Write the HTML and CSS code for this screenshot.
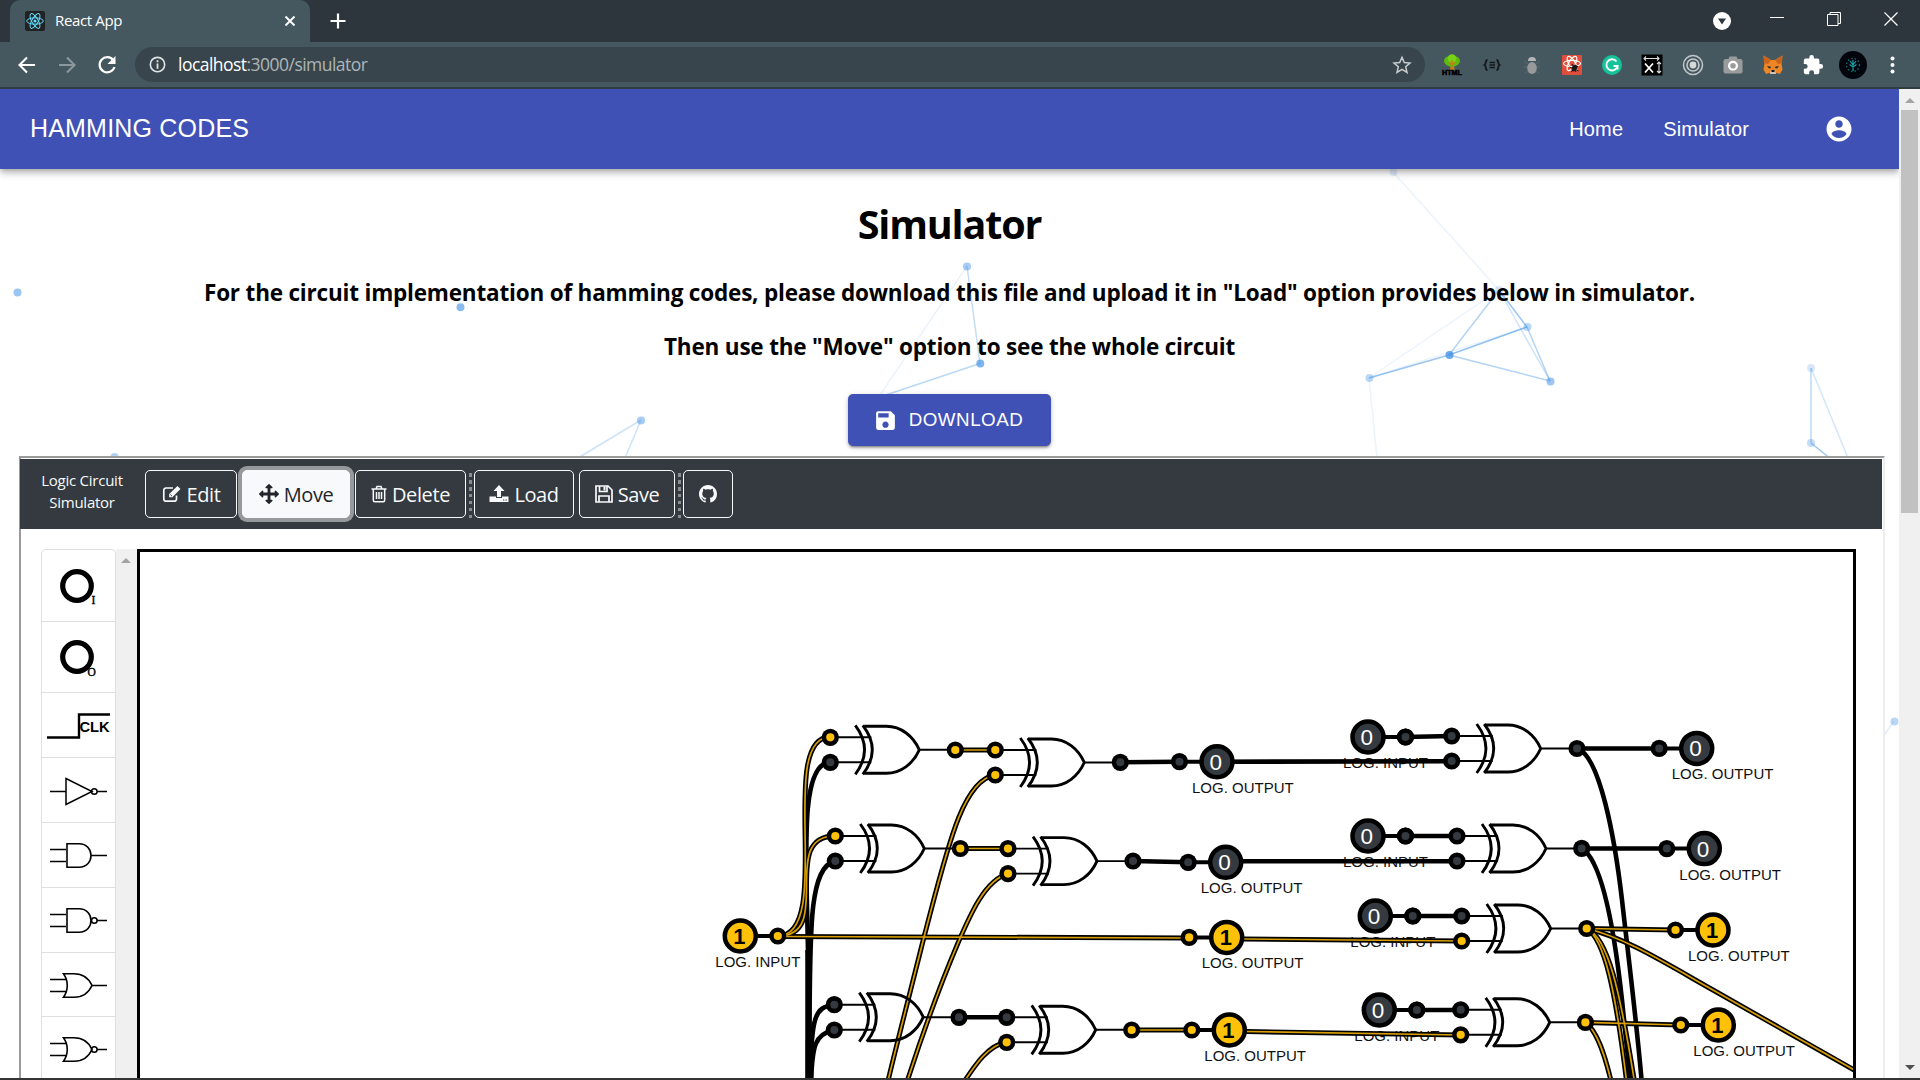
FILE: index.html
```html
<!DOCTYPE html>
<html lang="en">
<head>
<meta charset="utf-8">
<title>React App</title>
<link rel="stylesheet" href="styles.css">
</head>
<body>
<div class="window">
  <div class="tabstrip">
    <div class="tab">
      <svg class="favicon" viewBox="0 0 20 20"><rect width="20" height="20" rx="2" fill="#222"/><g fill="none" stroke="#61dafb" stroke-width="1"><ellipse cx="10" cy="10" rx="8.3" ry="3.2"/><ellipse cx="10" cy="10" rx="8.3" ry="3.2" transform="rotate(60 10 10)"/><ellipse cx="10" cy="10" rx="8.3" ry="3.2" transform="rotate(120 10 10)"/></g><circle cx="10" cy="10" r="1.6" fill="#61dafb"/></svg>
      <span class="tab-title">React App</span>
      <svg class="tab-close" viewBox="0 0 12 12"><path d="M1.5 1.5l9 9M10.500 1.500l-9 9" stroke="#fff" stroke-width="1.9"/></svg>
    </div>
    <svg class="newtab" viewBox="0 0 16 16"><path d="M8 .5v15M.5 8h15" stroke="#fff" stroke-width="2.2"/></svg>
    <div class="win-buttons">
      <svg viewBox="0 0 18 18" class="wb-media"><circle cx="9" cy="9" r="9" fill="#fff"/><path d="M5 6.500h8l-4 6z" fill="#2c363c"/></svg>
      <svg viewBox="0 0 14 14" class="wb"><path d="M0 5.500h14" stroke="#fff"/></svg>
      <svg viewBox="0 0 14 14" class="wb"><path d="M.5 2.500h10.500v11H.5zM3 2.500v-2h10.500v11H11" fill="none" stroke="#fff"/></svg>
      <svg viewBox="0 0 14 14" class="wb"><path d="M.5 .5l13 13M13.500 .5l-13 13" stroke="#fff" stroke-width="1.200"/></svg>
    </div>
  </div>
  <div class="toolbar">
    <svg class="nav" viewBox="0 0 20 20"><path d="M18 10H3M10 2.500L2.500 10l7.500 7.500" fill="none" stroke="#fff" stroke-width="2.100"/></svg>
    <svg class="nav" viewBox="0 0 20 20"><path d="M2 10h15M10 2.500l7.500 7.500-7.500 7.500" fill="none" stroke="#8d989d" stroke-width="2.100"/></svg>
    <svg class="nav" viewBox="0 0 20 20"><path d="M16.400 5.300A7.600 7.600 0 1 0 17.500 12" fill="none" stroke="#fff" stroke-width="2.200"/><path d="M18.500 1v8h-8z" fill="#fff"/></svg>
    <div class="omnibox">
      <svg class="info" viewBox="0 0 18 18"><circle cx="9" cy="9" r="7.600" fill="none" stroke="#dfe3e5" stroke-width="1.700"/><path d="M9 4.500v2M9 8v5.500" stroke="#dfe3e5" stroke-width="1.900"/></svg>
      <span class="url"><b>localhost</b>:3000/simulator</span>
      <svg class="star" viewBox="0 0 20 20"><path d="M10 2.300l2.300 5.200 5.700.5-4.300 3.800 1.300 5.600-5-3-5 3 1.300-5.600L2 8l5.700-.5z" fill="none" stroke="#c9cdcf" stroke-width="1.500"/></svg>
    </div>
    <div class="extensions">
      <svg viewBox="0 0 22 22"><path d="M9.500 11L9 16h4.500L13 11z" fill="#c8791c"/><ellipse cx="11" cy="7" rx="8" ry="5.500" fill="#5dbb10"/><circle cx="11" cy="4.500" r="4.300" fill="#76d214"/><path d="M11 6v5l3-3M11 11L8 8" fill="none" stroke="#c8791c" stroke-width="1.300"/><text x="11" y="21" text-anchor="middle" font-size="6.500" font-weight="700" stroke="#000" stroke-width=".5" textLength="20" lengthAdjust="spacingAndGlyphs">HTML</text></svg>
      <svg viewBox="0 0 22 22"><path d="M6.500 6C4 6 5.500 10 3.500 11c2 1 .5 5 3 5M15.500 6c2.500 0 1 4 3 5-2 1-.5 5-3 5" fill="none" stroke="#14191c" stroke-width="1.900"/><path d="M8.500 8.500h5.500M8.500 11h5.500M8.500 13.500h5.500" stroke="#14191c" stroke-width="1.300"/></svg>
      <svg viewBox="0 0 22 22"><path d="M3 7l4 3M19 7l-4 3M2.500 13H19M4 19l4-3M18 19l-4-3" stroke="#5d696e" stroke-width="1"/><ellipse cx="11" cy="14" rx="4.800" ry="6" fill="#98999b"/><path d="M7 7a4 4 0 0 1 8 0z" fill="#b5b5b5"/></svg>
      <svg viewBox="0 0 22 22"><rect x="1" y="1" width="20" height="20" rx="1" fill="#df4d3b"/><g fill="none" stroke="#fff" stroke-width="1.200"><ellipse cx="11" cy="9.500" rx="8.500" ry="3.200"/><ellipse cx="11" cy="9.500" rx="8" ry="3.200" transform="rotate(60 11 9.500)"/><ellipse cx="11" cy="9.500" rx="8" ry="3.200" transform="rotate(120 11 9.500)"/></g><ellipse cx="13.500" cy="14" rx="2.600" ry="3.500" transform="rotate(35 13.500 14)" fill="#1b1212"/><path d="M8.500 13l9 4M10 18l7-6M11 10l4 8" stroke="#1b1212"/></svg>
      <svg viewBox="0 0 22 22"><circle cx="11" cy="11" r="10" fill="#15c39a"/><path d="M15.500 7.500a5.600 5.600 0 1 0 1 4.500h-4M16.500 11.500v4" fill="none" stroke="#fff" stroke-width="1.900"/></svg>
      <svg viewBox="0 0 22 22"><rect x=".5" y=".5" width="21" height="21" fill="#000"/><path d="M4 9.500l8 9M12 9.500l-8 9" stroke="#fff" stroke-width="1.800"/><path d="M3 4.500h15M5 2.500l-2 2 2 2M16 2.500l2 2-2 2M18 8v11M16 10l2-2 2 2M16 17l2 2 2-2" fill="none" stroke="#ddd" stroke-width="1.100"/></svg>
      <svg viewBox="0 0 22 22"><g fill="none" stroke="#c4c8ca"><circle cx="11" cy="11" r="9.500" stroke-width="1.500"/><circle cx="11" cy="11" r="6" stroke-width="1.600"/></g><circle cx="11" cy="11" r="3.400" fill="#d5d8d9"/></svg>
      <svg viewBox="0 0 22 22"><rect x="1.500" y="5" width="19" height="14.500" rx="2.200" fill="#999b9c"/><path d="M6 6l1.500-3.500h7L16 6z" fill="#999b9c"/><circle cx="11" cy="11.700" r="3.900" fill="#999b9c" stroke="#fff" stroke-width="2.200"/></svg>
      <svg viewBox="0 0 22 22"><path d="M1.500 1.500L9 6h4l7.500-4.500-1 8 1 6-2.500 4.500-5-1.500h-4L4 20l-2.500-4.500 1-6z" fill="#ef8524"/><path d="M1.500 1.500L9 6l-3 4-4-1zM20.500 1.500L13 6l3 4 4-1z" fill="#c9651b"/><path d="M5 12l3.500.5.5 1.500-2 .5zM17 12l-3.500.5-.5 1.500 2 .5z" fill="#2b3237"/><path d="M8.500 16.500h5l.5 3.500H8z" fill="#d7c1b3"/><path d="M9.500 16h3v2h-3z" fill="#161616"/></svg>
      <svg viewBox="0 0 24 24"><path d="M20.500 11H19V7a2 2 0 0 0-2-2h-4V3.500a2.500 2.500 0 0 0-5 0V5H4a2 2 0 0 0-2 2v3.800h1.500a2.700 2.700 0 0 1 0 5.400H2V20c0 1.100.9 2 2 2h3.800v-1.500a2.700 2.700 0 0 1 5.400 0V22H17a2 2 0 0 0 2-2v-4h1.500a2.500 2.500 0 0 0 0-5z" fill="#fff"/></svg>
      <svg class="avatar" viewBox="0 0 28 28"><circle cx="14" cy="14" r="14" fill="#02050c"/><circle cx="14" cy="14" r="6.500" fill="none" stroke="#106a70" stroke-width="1.300" stroke-dasharray="1.500 2"/><path d="M14 9v11M11 10l3 4 3-4M10.500 13.500L14 16l3.500-2.500" fill="none" stroke="#159da3" stroke-width="1.200"/></svg>
      <svg viewBox="0 0 22 22"><g fill="#fff"><circle cx="10.500" cy="4.500" r="2"/><circle cx="10.500" cy="11" r="2"/><circle cx="10.500" cy="17.500" r="2"/></g></svg>
    </div>
  </div>

  <div class="viewport">
    <div class="page">
      <svg class="particles" viewBox="0 89 1899 989">
        <g stroke="#3a8ee6" fill="none" stroke-width="1.500">
          <path d="M967 266l13 97.500" opacity=".3"/><path d="M980 363.500L850 407" opacity=".35"/><path d="M967 266L880 395" opacity=".1"/>
          <path d="M641 420l-63 38M641 420l-16 38" opacity=".25"/>
          <path d="M1393 172l106 118M1369 378l130-88M1369 378l8 80M1369 378l158-51" opacity=".1"/>
          <path d="M1499 290l28 37M1369 378l80-23" opacity=".5"/><path d="M1449 355l78-28" opacity=".55"/>
          <path d="M1499 290l-50 65M1449 355l101 26M1527 327l23 54" opacity=".38"/><path d="M1499 290l51 91" opacity=".25"/>
          <path d="M1811 368v75" opacity=".35"/><path d="M1811 368l37 90" opacity=".22"/><path d="M1811 443l20 16" opacity=".5"/>
          <path d="M1894 721l-11 16" opacity=".15"/>
        </g>
        <g fill="#3a8ee6"><circle cx="17.500" cy="292.500" r="4" opacity=".5"/><circle cx="460.500" cy="307.300" r="4" opacity=".6"/><circle cx="641" cy="420.500" r="4" opacity=".45"/><circle cx="114.500" cy="457" r="4" opacity=".4"/><circle cx="967" cy="266.500" r="4" opacity=".45"/><circle cx="980.300" cy="363.500" r="4" opacity=".65"/><circle cx="1393.500" cy="172" r="4" opacity=".15"/><circle cx="1499" cy="290" r="4" opacity=".2"/><circle cx="1527.500" cy="327" r="4" opacity=".35"/><circle cx="1449.500" cy="355" r="4" opacity=".75"/><circle cx="1369.500" cy="378" r="4" opacity=".35"/><circle cx="1550.500" cy="381.500" r="4" opacity=".5"/><circle cx="1811" cy="368" r="4" opacity=".2"/><circle cx="1811" cy="443" r="4" opacity=".3"/><circle cx="1894.500" cy="721.500" r="4" opacity=".35"/></g>
      </svg>

      <header class="appbar">
        <span class="brand">HAMMING CODES</span>
        <nav class="links"><a>Home</a><a>Simulator</a></nav>
        <svg class="account" viewBox="0 0 24 24"><path fill="#fff" d="M12 2C6.480 2 2 6.480 2 12s4.480 10 10 10 10-4.480 10-10S17.520 2 12 2zm0 3c1.660 0 3 1.340 3 3s-1.340 3-3 3-3-1.340-3-3 1.340-3 3-3zm0 14.200c-2.500 0-4.710-1.280-6-3.220.03-1.990 4-3.080 6-3.080 1.990 0 5.970 1.090 6 3.080-1.290 1.940-3.500 3.220-6 3.220z"/></svg>
      </header>

      <section class="intro">
        <h1>Simulator</h1>
        <h3 class="line-one">For the circuit implementation of hamming codes, please download this file and upload it in "Load" option provides below in simulator.</h3>
        <h3 class="line-two">Then use the "Move" option to see the whole circuit</h3>
        <button class="download"><svg viewBox="0 0 24 24"><path fill="#fff" d="M17 3H5c-1.110 0-2 .9-2 2v14c0 1.100.89 2 2 2h14c1.100 0 2-.9 2-2V7l-4-4zm-5 16c-1.660 0-3-1.340-3-3s1.340-3 3-3 3 1.340 3 3-1.340 3-3 3zm3-10H5V5h10v4z"/></svg>DOWNLOAD</button>
      </section>

      <section class="frame">
        <div class="sim-bar">
          <div class="sim-name">Logic Circuit<br>Simulator</div>
          <div class="sim-buttons">
            <button class="btn b-edit"><svg viewBox="0 0 20 20"><path d="M14.500 11.500V15a2.200 2.200 0 0 1-2.200 2.200H4A2.200 2.200 0 0 1 1.800 15V6.200A2.200 2.200 0 0 1 4 4h7" fill="none" stroke="#f8f9fa" stroke-width="1.700"/><path d="M15.500 2l3 3-8.200 8.200H7.200v-3.100z" fill="#f8f9fa"/><path d="M8.300 10.500l1.700 1.700" stroke="#343a40"/></svg>Edit</button>
            <button class="btn b-move"><svg viewBox="0 0 1792 1792"><path fill="#212529" d="M1792 896q0 26-19 45l-256 256q-19 19-45 19t-45-19-19-45v-128h-384v384h128q26 0 45 19t19 45-19 45l-256 256q-19 19-45 19t-45-19l-256-256q-19-19-19-45t19-45 45-19h128v-384h-384v128q0 26-19 45t-45 19-45-19l-256-256q-19-19-19-45t19-45l256-256q19-19 45-19t45 19 19 45v128h384v-384h-128q-26 0-45-19t-19-45 19-45l256-256q19-19 45-19t45 19l256 256q19 19 19 45t-19 45-45 19h-128v384h384v-128q0-26 19-45t45-19 45 19l256 256q19 19 19 45z"/></svg>Move</button>
            <button class="btn b-delete"><svg viewBox="0 0 16 20"><path d="M.5 5h15M5 5l1-2.500h4L11 5M2.300 5v11q0 1.800 1.500 1.800h8.400q1.500 0 1.500-1.800V5M5.500 8v7M8 8v7M10.500 8v7" fill="none" stroke="#f8f9fa" stroke-width="1.500"/></svg>Delete</button>
            <i class="dots"></i>
            <button class="btn b-load"><svg viewBox="0 0 20 20"><path d="M10 1l5.500 6H12v6H8V7H4.500z" fill="#f8f9fa"/><path d="M.5 12.500H7V14h6v-1.500h6.500v5.500H.5z" fill="#f8f9fa"/><path d="M14 16h1.300M16.500 16h1.300" stroke="#343a40"/></svg>Load</button>
            <button class="btn b-save"><svg viewBox="0 0 18 20"><path d="M1 2h12l4 4v12H1zM4.500 2v5.500h7.500V2M4 18v-6h10v6" fill="none" stroke="#f8f9fa" stroke-width="1.700"/><path d="M8.500 2.500h2v4h-2z" fill="#f8f9fa"/></svg>Save</button>
            <i class="dots"></i>
            <button class="btn b-git"><svg viewBox="0 0 16 16"><path fill="#f8f9fa" d="M8 0C3.580 0 0 3.580 0 8c0 3.540 2.290 6.530 5.470 7.590.4.070.55-.17.55-.38 0-.19-.01-.82-.01-1.490-2.010.37-2.530-.49-2.690-.94-.09-.23-.48-.94-.82-1.130-.28-.15-.68-.52-.01-.53.63-.01 1.080.58 1.230.82.72 1.210 1.870.87 2.330.66.07-.52.28-.87.51-1.070-1.780-.2-3.640-.89-3.640-3.950 0-.87.31-1.590.82-2.150-.08-.2-.36-1.020.08-2.120 0 0 .67-.21 2.200.82.64-.18 1.320-.27 2-.27.68 0 1.360.09 2 .27 1.530-1.040 2.200-.82 2.200-.82.44 1.100.16 1.920.08 2.120.51.56.82 1.270.82 2.150 0 3.070-1.870 3.750-3.650 3.950.29.25.54.73.54 1.480 0 1.070-.01 1.930-.01 2.200 0 .21.15.46.55.38A8.013 8.013 0 0 0 16 8c0-4.420-3.580-8-8-8z"/></svg></button>
          </div>
        </div>
        <div class="workspace">
          <div class="palette">
            <div class="item r-io"><svg viewBox="0 0 75 72"><circle cx="36" cy="36" r="14.300" fill="none" stroke="#000" stroke-width="5.200"/><text x="50.500" y="54" class="io-letter">I</text></svg></div>
            <div class="item r-io2"><svg viewBox="0 0 75 71"><circle cx="36" cy="35" r="14.300" fill="none" stroke="#000" stroke-width="5.200"/><text x="46.500" y="54" class="io-letter">O</text></svg></div>
            <div class="item"><svg viewBox="0 0 75 64"><path d="M6 44.500h32V21.500h31" fill="none" stroke="#000" stroke-width="2.400"/><text x="38.500" y="38.500" class="clk">CLK</text></svg></div>
            <div class="item"><svg viewBox="0 0 75 64"><g fill="none" stroke="#000" stroke-width="1.500"><path d="M9 33.500h16M25 20.500v26l26-13zM56 33.500h10"/><circle cx="53.300" cy="33.500" r="2.800"/></g></svg></div>
            <div class="item"><svg viewBox="0 0 75 64"><g fill="none" stroke="#000" stroke-width="1.300"><path d="M9 26.500h16M9 38.500h16M50 32.500h16"/><path d="M26 20.800h12c16 0 16 23.400 0 23.400H26z" stroke-width="1.600"/></g></svg></div>
            <div class="item"><svg viewBox="0 0 75 64"><g fill="none" stroke="#000" stroke-width="1.300"><path d="M9 26.500h16M9 38.500h16M56 32.500h10"/><path d="M26 20.800h12c16 0 16 23.400 0 23.400H26z" stroke-width="1.600"/><circle cx="53.300" cy="32.500" r="2.800" stroke-width="1.600"/></g></svg></div>
            <div class="item"><svg viewBox="0 0 75 64"><g fill="none" stroke="#000" stroke-width="1.300"><path d="M9 26.500h17M9 38.500h17M51 32.500h15"/><path d="M22.500 20.800H33c9 0 15 5.200 18 11.700C48 39 42 44.200 33 44.200H22.500c5-7 5-16.400 0-23.400z" stroke-width="1.600"/></g></svg></div>
            <div class="item"><svg viewBox="0 0 75 64"><g fill="none" stroke="#000" stroke-width="1.300"><path d="M9 26.500h17M9 38.500h17M56 32.500h10"/><path d="M22.500 20.800H33c9 0 15 5.200 18 11.700C48 39 42 44.200 33 44.200H22.500c5-7 5-16.400 0-23.400z" stroke-width="1.600"/><circle cx="53.300" cy="32.500" r="2.800" stroke-width="1.600"/></g></svg></div>
          </div>
          <div class="palette-scroll"><i class="arrow-up"></i></div>
          <div class="canvas">
            <svg viewBox="140 552 1713 526" preserveAspectRatio="xMinYMin slice">
              <defs>
                <g id="off"><circle r="8.600"/><circle r="4" fill="#343a40"/></g>
                <g id="on"><circle r="8.600"/><circle r="4.100" fill="#ffc107"/></g>
                <g id="xor" fill="none" stroke="#000">
                  <path d="M0 0H41M0 25H41M89 12.500H125" stroke-width="1.900"/>
                  <path d="M25 -12Q43.500 12.500 25 37" stroke-width="2.900"/>
                  <path d="M32.500 -12Q51.500 12.500 32.500 37" stroke-width="2.900"/>
                  <path d="M34 -11H56C71 -11 83 -1 89 12.500C83 26 71 36 56 36H34" stroke-width="2.900"/>
                </g>
                <g id="in0"><path d="M0 0H37.500" stroke="#000" stroke-width="4"/><circle r="15.500" fill="#343a40" stroke="#000" stroke-width="4.500"/><text x="-7.500" y="8" class="zero">0</text><text x="-25" y="31" class="tag">LOG. INPUT</text><use href="#off" x="37.500"/></g>
                <g id="in1"><path d="M0 0H37.500" stroke="#000" stroke-width="4"/><circle r="15.500" fill="#ffc107" stroke="#000" stroke-width="4.500"/><text x="-7" y="8" class="one">1</text><text x="-25" y="31" class="tag">LOG. INPUT</text><use href="#on" x="37.500"/></g>
                <g id="out0"><path d="M0 0H-37.500" stroke="#000" stroke-width="4"/><circle r="15.500" fill="#343a40" stroke="#000" stroke-width="4.500"/><text x="-7.500" y="8" class="zero">0</text><text x="-25" y="31" class="tag">LOG. OUTPUT</text><use href="#off" x="-37.500"/></g>
                <g id="out1"><path d="M0 0H-37.500" stroke="#000" stroke-width="4"/><circle r="15.500" fill="#ffc107" stroke="#000" stroke-width="4.500"/><text x="-7" y="8" class="one">1</text><text x="-25" y="31" class="tag">LOG. OUTPUT</text><use href="#on" x="-37.500"/></g>
                <g id="live">
                  <path d="M778 936C835 936 776 737 830 737"/><path d="M778 936C835 936 778 836 835 836"/>
                  <path d="M778 936.500L1189 938"/><path d="M955 750H995M960 848.500H1008"/>
                  <path d="M995 775C962 780 947 850 924 937C912 985 899 1035 887 1085"/>
                  <path d="M1008 873.600C985 880 970 915 958 943C938 990 922 1035 906 1085"/>
                  <path d="M1007 1042C988 1045 975 1065 962 1085"/>
                  <path d="M1132 1030H1192M1244 939L1462 941M1246 1031.500L1461 1035"/>
                  <path d="M1587 928.500L1676 930M1585 1022.400L1681 1025"/>
                  <path d="M1587 928.500C1625 938 1660 960 1713 990L1856 1071"/>
                  <path d="M1587 928.500C1604 940 1615 985 1627 1085"/><path d="M1587 928.500C1608 938 1620 990 1635 1085"/>
                  <path d="M1585 1022.400C1597 1030 1605 1055 1612 1085"/>
                </g>
              </defs>
              <use href="#in0" x="1368" y="737"/><use href="#in0" x="1368" y="836"/><use href="#in0" x="1375.300" y="916"/><use href="#in0" x="1379.300" y="1010"/>
              <g fill="none" stroke="#000" stroke-width="4.600">
                <path d="M830 762C800 764 806 850 808 950S809 1050 809 1085"/><path d="M835 861C805 868 811 950 809 1085"/>
                <path d="M834 1005C815 1007 811 1015 810 1085"/><path d="M834 1030C815 1034 812 1045 811 1085"/>
                <path d="M808 950V1085" stroke-width="5.500"/><path d="M809.500 1040V1085" stroke-width="7.500"/>
                <path d="M959 1017.300H1007M1120 762.300L1179 761.700M1133 861L1188 862.300M1217 761.700L1452 761.300M1226 861.300H1457"/>
                <path d="M1405 737L1452 736M1405 836H1457M1412 916H1462M1416 1010H1461"/>
                <path d="M1577 748.500H1659M1582 848.500H1667"/>
                <path d="M1577 748.500C1600 755 1615 840 1622 900C1628 953 1637 1025 1642 1085"/>
                <path d="M1582 848.500C1604 862 1616 945 1622 1000Q1626 1040 1631 1085"/>
              </g>
              <use href="#live" fill="none" stroke="#000" stroke-width="5"/>
              <use href="#live" fill="none" stroke="#d79f05" stroke-width="1.700"/>
              <use href="#xor" x="830.300" y="737.300"/><use href="#xor" x="995.300" y="750"/><use href="#xor" x="835.300" y="836"/><use href="#xor" x="1008" y="848.600"/><use href="#xor" x="834.300" y="1004.700"/><use href="#xor" x="1006.700" y="1017.300"/><use href="#xor" x="1451.700" y="736"/><use href="#xor" x="1457" y="836"/><use href="#xor" x="1461.700" y="916"/><use href="#xor" x="1460.700" y="1009.800"/>
              <use href="#on" x="830.300" y="737.300"/><use href="#off" x="830.300" y="762.300"/><use href="#on" x="955.300" y="750"/>
              <use href="#on" x="995.300" y="750"/><use href="#on" x="995.300" y="775"/><use href="#off" x="1120.300" y="762.300"/>
              <use href="#on" x="835.300" y="836"/><use href="#off" x="835.300" y="861"/><use href="#on" x="960.300" y="848.500"/>
              <use href="#on" x="1008" y="848.600"/><use href="#on" x="1008" y="873.600"/><use href="#off" x="1133" y="861"/>
              <use href="#off" x="834.300" y="1004.700"/><use href="#off" x="834.300" y="1030"/><use href="#off" x="959" y="1017.300"/>
              <use href="#off" x="1006.700" y="1017.300"/><use href="#on" x="1006.700" y="1042.300"/><use href="#on" x="1131.700" y="1030"/>
              <use href="#off" x="1451.700" y="736"/><use href="#off" x="1451.700" y="761"/><use href="#off" x="1577" y="748.500"/>
              <use href="#off" x="1457" y="836"/><use href="#off" x="1457" y="861"/><use href="#off" x="1581.700" y="848.400"/>
              <use href="#off" x="1461.700" y="916"/><use href="#on" x="1461.700" y="941"/><use href="#on" x="1586.700" y="928.500"/>
              <use href="#off" x="1460.700" y="1009.800"/><use href="#on" x="1460.700" y="1034.800"/><use href="#on" x="1585.400" y="1022.400"/>
              <use href="#off" x="1405.500" y="737"/><use href="#off" x="1405.500" y="836"/><use href="#off" x="1412.800" y="916"/><use href="#off" x="1416.800" y="1010"/>
              <use href="#in1" x="740.300" y="936"/>
              <use href="#out0" x="1217" y="761.700"/><use href="#out0" x="1225.700" y="862.300"/><use href="#out1" x="1226.700" y="937.400"/><use href="#out1" x="1229.300" y="1030"/>
              <use href="#out0" x="1696.700" y="748.400"/><use href="#out0" x="1704.300" y="848.600"/><use href="#out1" x="1713" y="930"/><use href="#out1" x="1718.300" y="1025"/>
            </svg>
          </div>
        </div>
      </section>
    </div>
    <div class="page-scroll"><i class="arrow-up"></i><div class="thumb"></div><i class="arrow-down"></i></div>
  </div>
  <div class="taskbar"></div>
</div>
</body>
</html>
```
FILE: styles.css
```css
* { box-sizing: border-box; }
body { margin: 0; background: #fff; overflow: hidden; }
svg { display: block; flex: none; }
button { margin: 0; padding: 0; }
.window { width: 1920px; height: 1080px; display: flex; flex-direction: column; overflow: hidden; font-family: "Open Sans", "Noto Sans", sans-serif; }

.tabstrip { height: 42px; flex: none; background: #2c363c; display: flex; align-items: center; padding-left: 10px; }
.tab { width: 300px; height: 42px; background: #455860; border-radius: 10px 10px 0 0; display: flex; align-items: center; padding: 0 14px 0 15px; color: #fff; font-size: 15px; }
.favicon { width: 20px; height: 20px; margin-right: 10px; }
.tab-title { flex: 1; letter-spacing: -0.35px; margin-top: -2px; }
.tab-close { width: 12px; height: 12px; }
.newtab { width: 16px; height: 16px; margin-left: 20px; }
.win-buttons { margin-left: auto; display: flex; align-items: flex-start; height: 42px; padding: 12px 22px 0 0; }
.wb-media { width: 18px; height: 18px; margin-right: 39px; }
.wb { width: 14px; height: 14px; }
.wb + .wb { margin-left: 43px; }

.toolbar { height: 47px; flex: none; background: #455860; border-bottom: 2px solid #2f3c42; display: flex; align-items: center; padding-left: 17px; }
.nav { width: 20px; height: 20px; margin-right: 20px; }
.omnibox { width: 1290px; height: 35px; margin-left: -2px; border-radius: 18px; background: #39454c; display: flex; align-items: center; padding: 0 13px 0 14px; }
.info { width: 17px; height: 17px; margin-right: 12px; }
.url { flex: 1; color: #adb5b9; font-size: 17.500px; line-height: 24px; letter-spacing: -0.53px; margin-top: -1px; }
.url b { color: #fff; font-weight: 400; }
.star { width: 20px; height: 20px; }
.extensions { display: flex; align-items: center; gap: 18.100px; margin-left: 16px; font-family: "Liberation Sans", sans-serif; }
.extensions svg { width: 22px; height: 22px; }
.extensions .avatar { width: 28px; height: 28px; margin: 0 -3px; }

.viewport { flex: 1; min-height: 0; display: flex; }
.page { width: 1899px; position: relative; overflow: hidden; display: flex; flex-direction: column; }
.particles { position: absolute; left: 0; top: 0; width: 1899px; height: 989px; }
.appbar { position: relative; height: 80px; flex: none; background: #3f51b5; box-shadow: 0 2px 5px -1px rgba(0,0,0,.2), 0 5px 6px rgba(0,0,0,.14), 0 1px 12px rgba(0,0,0,.12); display: flex; align-items: center; padding: 0 45px 0 30px; color: #fff; font-family: "Liberation Sans", Arial, sans-serif; }
.brand { font-size: 25px; letter-spacing: .19px; margin-top: -2px; }
.links { margin-left: auto; display: flex; gap: 40px; font-size: 20px; letter-spacing: .15px; }
.account { width: 30px; height: 30px; margin-left: 75px; }

.intro { position: relative; height: 287px; flex: none; display: flex; flex-direction: column; align-items: center; color: #000; }
h1, h3 { margin: 0; white-space: nowrap; font-weight: 700; }
h1 { font-size: 39.500px; line-height: 54px; margin-top: 28px; letter-spacing: -1.150px; }
h3 { font-size: 22.500px; line-height: 32px; letter-spacing: -0.190px; }
.line-one { margin-top: 26px; }
.line-two { margin-top: 22px; }
.download { margin-top: 31px; width: 203px; height: 52px; border: 0; border-radius: 5px; background: #3f51b5; color: #fff; display: flex; align-items: center; justify-content: center; gap: 11px; padding-right: 3px; font: 18.750px "Liberation Sans", Arial, sans-serif; letter-spacing: .54px; box-shadow: 0 3px 2px -2px rgba(0,0,0,.3), 0 2px 3px rgba(0,0,0,.2), 0 1px 6px rgba(0,0,0,.14); }
.download svg { width: 25px; height: 25px; }

.frame { position: relative; width: 1866px; margin-left: 19px; flex: 1; min-height: 0; border: 2px solid #9a9a9a; border-right-color: #eee; border-bottom: 0; padding: 1px 1px 0 0; display: flex; flex-direction: column; background: #fff; }
.sim-bar { height: 70px; flex: none; background: #343a40; display: flex; align-items: center; padding-left: 20px; margin-left: -1px; }
.sim-name { width: 84px; text-align: center; color: #f8f9fa; font-size: 15px; line-height: 22px; letter-spacing: -0.250px; margin-top: -6px; white-space: nowrap; }
.sim-buttons { display: flex; margin-left: 21px; height: 48px; align-items: stretch; }
.btn { border: 1px solid #f8f9fa; border-radius: 5px; background: none; color: #f8f9fa; font: 20px "Open Sans", "Noto Sans", sans-serif; letter-spacing: -0.4px; display: flex; align-items: center; justify-content: center; gap: 5px; }
.btn svg { height: 20px; width: 20px; }
.b-edit { width: 92px; }
.b-move { width: 108px; margin-left: 5px; background: #f8f9fa; color: #212529; box-shadow: 0 0 0 4px #95999c; }
.b-delete { width: 111px; margin-left: 5px; }
.b-delete svg { width: 16px; }
.dots { width: 3px; margin: 0 2px 0 3px; border-left: 3px dashed #8a8d90; border-image: repeating-linear-gradient(#8a8d90 0 3px, transparent 3px 6px) 3; }
.b-load { width: 100px; }
.b-save { width: 96px; margin-left: 5px; }
.b-save svg { width: 18px; }
.b-git { width: 50px; }
.b-git svg { width: 18px; height: 18px; }

.workspace { flex: 1; min-height: 0; display: flex; padding: 20px 26px 0 20px; overflow: hidden; }
.palette { width: 75px; border: 1px solid #dfdfdf; border-bottom: 0; border-radius: 5px 5px 0 0; overflow: hidden; display: flex; flex-direction: column; }
.item { height: 64.900px; flex: none; border-bottom: 1px solid #dfdfdf; }
.item svg { width: 75px; margin-left: -1px; }
.r-io { height: 72px; }
.r-io2 { height: 71px; }
.io-letter { font: 11.500px "Liberation Serif", serif; stroke: #000; stroke-width: .4px; }
.clk { font: 700 14.700px "Liberation Sans", sans-serif; }
.palette-scroll { width: 21px; background: #f0f0f0; display: flex; justify-content: center; padding: 9px 1px 0 0; }
.canvas { flex: 1; border: 3px solid #000; border-bottom: 0; overflow: hidden; background: #fff; }
.canvas svg { width: 1713px; height: 526px; }
.zero { font: 22.500px "Liberation Sans", Arial, sans-serif; fill: #fff; }
.one { font: 700 22px "Liberation Sans", Arial, sans-serif; }
.tag { font: 15px "Liberation Sans", Arial, sans-serif; fill: #111; }

.page-scroll { width: 21px; background: #f0f0f0; display: flex; flex-direction: column; align-items: center; padding: 9px 0 8px; }
.arrow-up { width: 0; height: 0; border: 5px solid transparent; border-top: 0; border-bottom-color: #a3a3a3; }
.arrow-down { width: 0; height: 0; border: 5px solid transparent; border-bottom: 0; border-top-color: #505050; margin-top: auto; }
.thumb { width: 17px; height: 403px; margin-top: 7px; background: #c1c1c1; }
.taskbar { height: 2px; flex: none; background: #343436; }
```
